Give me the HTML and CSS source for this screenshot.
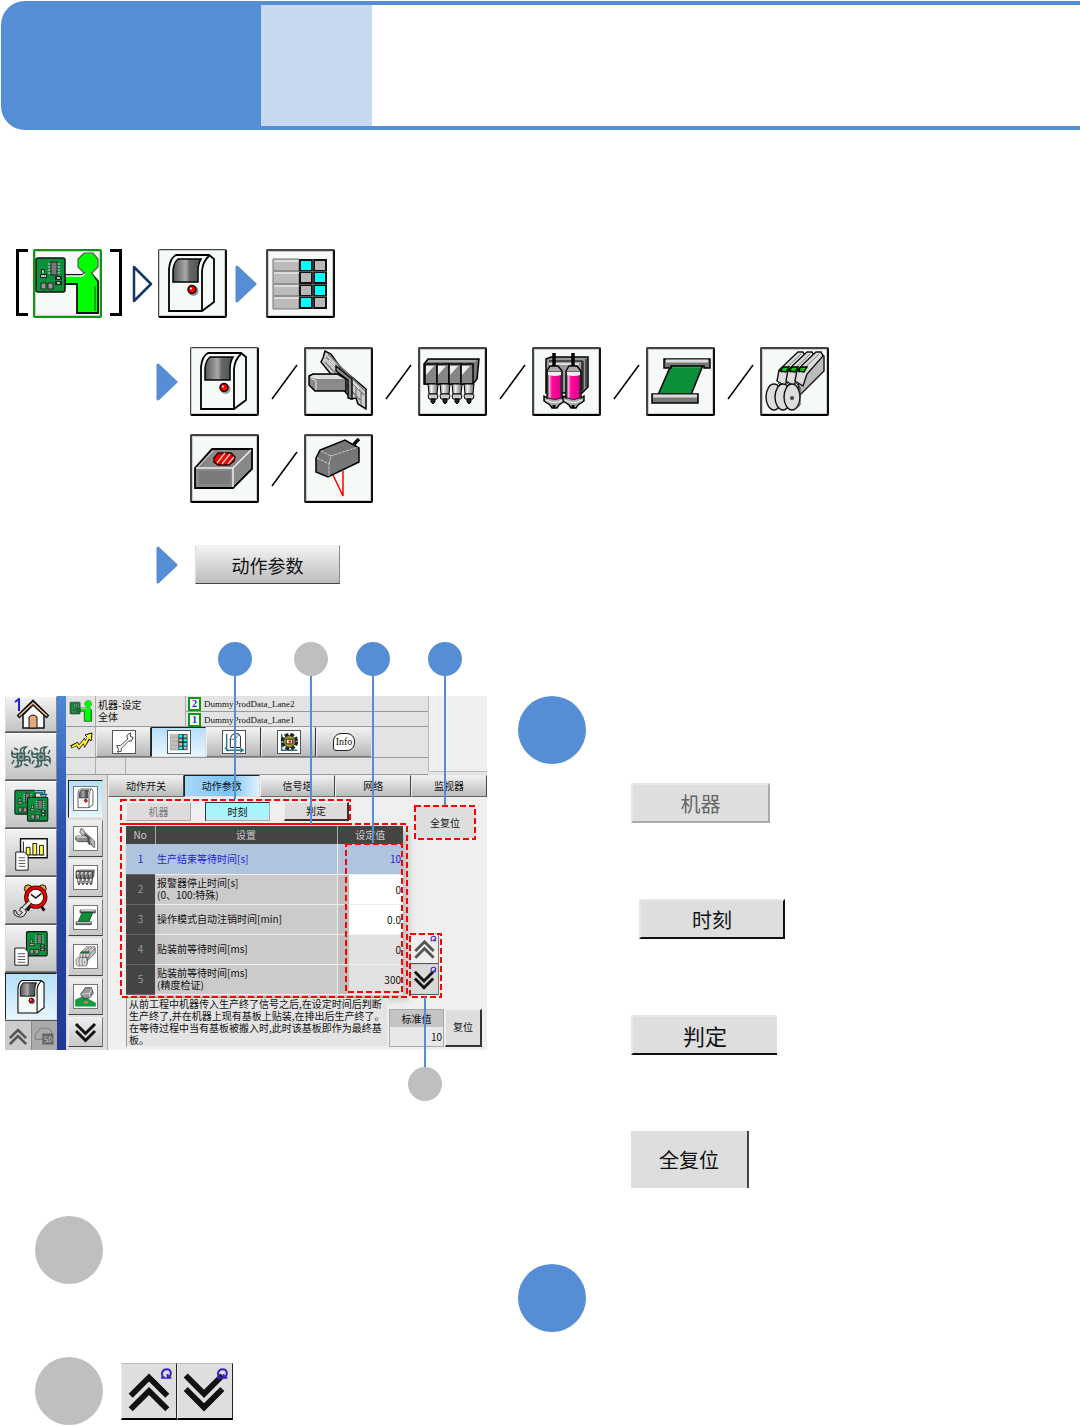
FILE: index.html
```
<!DOCTYPE html>
<html lang="zh-CN">
  <head>
    <meta charset="UTF-8" />
    <meta name="viewport" content="width=device-width, initial-scale=1.0" />
    <title>动作参数</title>
    <link rel="stylesheet" href="styles.css" />
  </head>
  <body>
    <!-- icon set -->
    <svg class="sprite" aria-hidden="true">
      <defs>
        <linearGradient id="g-window">
          <stop offset="0" stop-color="#555" />
          <stop offset="0.45" stop-color="#aaa" />
          <stop offset="0.6" stop-color="#666" />
          <stop offset="1" stop-color="#4c524e" />
        </linearGradient>
        <linearGradient id="g-metal">
          <stop offset="0" stop-color="#888" />
          <stop offset="0.35" stop-color="#eee" />
          <stop offset="1" stop-color="#666" />
        </linearGradient>
        <linearGradient id="g-pink">
          <stop offset="0" stop-color="#fff" />
          <stop offset="0.3" stop-color="#ff0a9a" />
          <stop offset="1" stop-color="#e0008a" />
        </linearGradient>
        <g id="chips">
          <rect x="3" y="9" width="29" height="34" rx="2" fill="#0a9038" stroke="#111" stroke-width="1.5" />
          <path d="M15 15h12M15 18h12M15 21h12M15 24h12" stroke="#cdd" />
          <rect x="18" y="13" width="6" height="13" fill="#777" stroke="#222" />
          <path d="M10 20v4M7 27h7M22 29h7M22 34h7" stroke="#222" stroke-width="4" />
          <path d="M10 21v3M8 27h5M24 29h3M24 34h3" stroke="#bbb" stroke-width="2" />
          <path d="M8 34h5v6H8zM15 34h5v6h-5z" fill="#999" stroke="#222" />
        </g>
      </defs>
      <symbol id="i-person" viewBox="0 0 69 69">
        <path d="M32 26h17l5-3h3l8 9v32H44V35H32z" fill="#00ff00" stroke="#111" stroke-width="1.800" />
        <path d="M32 27h17l4-3-9-6V9l6-6h4" fill="none" stroke="#fff" stroke-width="1.500" />
        <path d="M51 4h9l5 6v8l-6 6h-8l-6-6v-8z" fill="#00ff00" stroke="#555" stroke-width="1.2" />
        <path d="M55 20l-5 9h12z" fill="#00ff00" />
        <path d="M62 37v25" stroke="#00b000" stroke-width="2" />
        <use href="#chips" />
      </symbol>
      <symbol id="i-machine" viewBox="0 0 69 69">
        <path d="M12 62V20Q13 9 19 6h33l5 4v43L45 62z" fill="#f6faf6" stroke="#000" stroke-width="1.8" />
        <path d="M45 62V22q1-10 7-15" fill="none" stroke="#000" stroke-width="1.8" />
        <path d="M16 33V21q1-8 5-11h23q-3 5-3 12v11z" fill="url(#g-window)" stroke="#000" stroke-width="1.5" />
        <circle cx="36.500" cy="42" r="5" fill="#999" />
        <circle cx="35" cy="40.500" r="4" fill="#f00" stroke="#000" stroke-width="1.5" />
        <circle cx="34" cy="39.500" r="1" fill="#fff" />
      </symbol>
      <symbol id="i-grid" viewBox="0 0 69 69">
        <path d="M7 10h26v50H7z" fill="#bbb" stroke="#777" />
        <path d="M8 22h25M8 35h25M8 47h25" stroke="#666" />
        <path d="M8 24h25M8 37h25M8 49h25M8 12h25" stroke="#fff" />
        <path d="M33 10h28v50H33z" fill="#111" />
        <path d="M49 12h10v9H49zM35 24h10v9H35zM35 37h10v9H35zM49 49h10v9H49z" fill="#b8b8b8" />
        <path d="M35 12h10v9H35zM49 24h10v9H49zM49 37h10v9H49zM35 49h10v9H35z" fill="#00ffff" />
        <path d="M47 10v50M33 22.500h28M33 35.500h28M33 47.500h28" stroke="#888" stroke-width="0.600" />
      </symbol>
      <symbol id="i-conveyor" viewBox="0 0 69 69">
        <path d="M19 11l2-7 6 3 9 13 26 22v20l-8-5-2-6-5 1-30-37z" fill="#ccc" stroke="#000" stroke-width="1.5" />
        <path d="M22 10l38 38M24 7l37 37M21 15l35 38M57 46v12M52 40v10" fill="none" stroke="#777" stroke-width="1.2" />
        <path d="M25 13l30 29" stroke="#fff" />
        <path d="M32 19l16 13v20l-4-1V33l-12-9z" fill="#8a8a8a" stroke="#000" stroke-width="1.4" />
        <path d="M5 29l4-2h25l8 5v12H11l-6-6z" fill="#888" stroke="#000" stroke-width="1.5" />
        <path d="M6 30l3-2h24l7 4H12z" fill="#ddd" />
        <path d="M14 35h26v7H14z" fill="#8c8c8c" />
        <path d="M7 31l5 3v9" fill="none" stroke="#eee" />
      </symbol>
      <symbol id="i-nozzle" viewBox="0 0 69 69">
        <path d="M6 17l4-5h51l-2 20-4 5H6z" fill="#777" stroke="#000" stroke-width="1.5" />
        <path d="M10 14h48" stroke="#ddd" />
        <g id="nz">
          <path d="M7 17h12v20H7z" fill="#858585" stroke="#000" stroke-width="1.4" />
          <path d="M8 19h8L8 28z" fill="#eee" />
          <path d="M10 37h10l-1 10h-8z" fill="url(#g-metal)" stroke="#000" />
          <path d="M11 47h8l1 2-1 3h-8l-1-3z" fill="#ccc" stroke="#000" />
          <path d="M13 52h4v3l-2 2-2-2z" fill="#222" stroke="#000" />
        </g>
        <use href="#nz" x="12" />
        <use href="#nz" x="24" />
        <use href="#nz" x="36" />
      </symbol>
      <symbol id="i-syringe" viewBox="0 0 69 69">
        <path d="M14 12l5-2h37v30l-6 6H14z" fill="#999" stroke="#000" stroke-width="1.5" />
        <path d="M17 14h33v30M51 14v29M54 12v28" fill="none" stroke="#333" stroke-width="1.5" />
        <path d="M17 17h30" stroke="#ddd" stroke-width="2" />
        <g id="syr">
          <path d="M15 24l3-5h8l4 5v27l3-2v5l-6 4-2 3h-5l-2-3-6-4v-5l3 2z" fill="#aaa" stroke="#000" stroke-width="1.4" />
          <path d="M16 25h13v26q-6 3-13 0z" fill="url(#g-pink)" stroke="#222" />
          <path d="M16 25h13v3q-6 2-13 0z" fill="#eee" />
          <path d="M22 6v13" stroke="#000" stroke-width="3.500" />
          <path d="M14 53q8 5 17 0" fill="none" stroke="#fff" />
          <path d="M22 58v3" stroke="#000" stroke-width="3" />
        </g>
        <use href="#syr" x="19" />
      </symbol>
      <symbol id="i-film" viewBox="0 0 69 69">
        <path d="M25 18h32L45 48H12z" fill="#0a9038" stroke="#000" stroke-width="1.5" />
        <path d="M27 20h28" stroke="#20d060" />
        <path d="M18 12h46v9h-6v-2H25v2h-7z" fill="#777" stroke="#000" stroke-width="1.5" />
        <path d="M20 14h42" stroke="#ddd" stroke-width="3" />
        <path d="M6 47h46v9H6z" fill="#777" stroke="#000" stroke-width="1.5" />
        <path d="M7 49h44" stroke="#ddd" stroke-width="3" />
      </symbol>
      <symbol id="i-feeder" viewBox="0 0 69 69">
        <path d="M38 29L60 6l4 3v15L39 49z" fill="#bbb" stroke="#111" stroke-width="1.4" />
        <g id="feed">
          <path d="M17 34l2-11L38 5h5l2 4-16 18-4 12z" fill="#ddd" stroke="#111" stroke-width="1.4" />
          <path d="M21 26L41 7" stroke="#777" />
          <path d="M20 24l3-4h6l-3 5z" fill="#00d000" stroke="#000" stroke-width="1.4" />
          <ellipse cx="14" cy="50" rx="8" ry="13" fill="#ddd" stroke="#111" stroke-width="1.4" />
          <path d="M18 36l4 4v18l-6 5" fill="none" stroke="#333" />
        </g>
        <use href="#feed" x="9" />
        <use href="#feed" x="18" />
        <circle cx="32" cy="51" r="2" fill="#444" />
      </symbol>
      <symbol id="i-sensor" viewBox="0 0 69 69">
        <path d="M5 34l17-19h40v20L43 54H5z" fill="#888" stroke="#000" stroke-width="1.8" />
        <path d="M6 34h37L61 16M43 34v19" fill="none" stroke="#eee" stroke-width="1.5" />
        <path d="M7 34l16-17" stroke="#ddd" />
        <path d="M9 37h31v13H9z" fill="#7b7b7b" />
        <path d="M28 19h13l4 4-1 4-5 4H28l-4-3v-4z" fill="#e00" stroke="#300" stroke-width="1.500" />
        <path d="M27 29l8-10M32 30l8-10M38 30l6-7" stroke="#fcc" stroke-width="1.3" />
      </symbol>
      <symbol id="i-laser" viewBox="0 0 69 69">
        <path d="M48 14l3-5 4-4" fill="none" stroke="#000" stroke-width="3.500" />
        <path d="M12 24l4-8L41 6l14 8v14L24 43l-12-5z" fill="#777" stroke="#000" stroke-width="1.5" />
        <path d="M13 24l12 6v12M25 30l2-8 27-9M17 17l10 5" fill="none" stroke="#ccc" stroke-dasharray="3 1" />
        <path d="M29 41l10 21V37" fill="none" stroke="#f00" stroke-width="1.500" />
      </symbol>
      <symbol id="i-work" viewBox="0 0 69 69">
        <path d="M4 64V44l24-10 37 20v10z" fill="#0aa040" stroke="#064" />
        <path d="M20 28l14-20h18l6 16-10 14-18 4z" fill="#999" stroke="#111" stroke-width="2" />
        <path d="M24 28l22-4 8-12M46 24l2 14" fill="none" stroke="#eee" stroke-width="2" />
        <ellipse cx="36" cy="52" rx="7" ry="4" fill="#f65" />
      </symbol>
      <symbol id="i-boards" viewBox="0 0 60 50">
        <g transform="translate(4 -5)"><use href="#chips" /></g>
        <path d="M36 6h12v7" fill="none" stroke="#111" stroke-width="5" />
        <path d="M35 6h13v5" fill="none" stroke="#5cf" stroke-width="2.500" />
        <path d="M43 10h10l-5 6z" fill="#5cf" stroke="#111" />
        <g transform="translate(22 5)"><use href="#chips" /></g>
      </symbol>
      <symbol id="i-home" viewBox="0 0 42 32">
        <path d="M13 30V17L23 7l11 10v13z" fill="#fff" stroke="#111" stroke-width="1.5" />
        <path d="M8 19L23 4l15 15" fill="none" stroke="#111" stroke-width="4" />
        <path d="M9 18L23 5l14 13" fill="none" stroke="#f3c49b" stroke-width="1.500" />
        <path d="M19 30V19q4-4 8 0v11z" fill="#e9a77c" stroke="#111" />
        <path d="M5 4l4-3v12" fill="none" stroke="#22c" stroke-width="2" />
      </symbol>
      <symbol id="i-fans" viewBox="0 0 42 24">
        <g id="fan" fill="none" stroke="#3f5d59" stroke-width="1.600">
          <circle cx="11" cy="12" r="4" fill="#8ba8a0" />
          <path d="M11 8q-2-6 5-6-4 3-1 7M15 12q6-2 5 5-2-4-6-1M11 16q2 6-5 6 4-3 1-7M7 12q-6 2-5-5 2 4 6 1" />
          <path d="M8 5L4 3M18 9l2-4M14 19l4 2M4 15l-2 4" />
          <circle cx="11" cy="12" r="1" />
        </g>
        <use href="#fan" x="20" />
      </symbol>
      <symbol id="i-chart" viewBox="0 0 42 42">
        <path d="M10 6h28v20H10z" fill="#fff" stroke="#111" stroke-width="1.500" />
        <path d="M13 9v14h22" fill="none" stroke="#111" />
        <path d="M16 15h4v8h-4zM23 11h4v12h-4zM30 13h4v10h-4z" fill="#ffff50" stroke="#111" />
        <path d="M5 20h9l4 4v15H5z" fill="#fff" stroke="#111" />
        <path d="M8 26h7M8 29h7M8 32h7M8 35h7" stroke="#555" />
      </symbol>
      <symbol id="i-alarm" viewBox="0 0 42 42">
        <circle cx="18" cy="8" r="4" fill="#e8a840" stroke="#111" />
        <circle cx="33" cy="8" r="4" fill="#e8a840" stroke="#111" />
        <path d="M20 27l-3 4M32 27l3 4" stroke="#111" stroke-width="3" />
        <circle cx="26" cy="17" r="10" fill="#fff" stroke="#400" stroke-width="4.500" />
        <circle cx="26" cy="17" r="10" fill="none" stroke="#e00" stroke-width="2.500" />
        <path d="M21 14l5 4 6-5" fill="none" stroke="#111" stroke-width="1.500" />
        <path d="M5 31q0 4 4 5l3-3-3-2 1-3q6-1 6 5-2 5-6 5-8-1-7-7z" fill="#ddd" stroke="#111" />
        <path d="M13 29l7-7" stroke="#111" stroke-width="5" />
        <path d="M13 29l7-7" stroke="#ddd" stroke-width="3" />
      </symbol>
      <symbol id="i-report" viewBox="0 0 42 42">
        <g transform="translate(14 -4) scale(0.75)"><use href="#chips" /></g>
        <path d="M4 20h10l4 4v14H4z" fill="#fff" stroke="#111" />
        <path d="M7 26h8M7 29h8M7 32h8M7 35h8" stroke="#555" />
      </symbol>
      <symbol id="i-sd" viewBox="0 0 28 28">
        <path d="M4 12l6-7h10l3 5v8H4z" fill="#aaa" stroke="#777" />
        <path d="M12 11h13v13H12z" fill="#666" />
        <path d="M18 15h-3v3h3v3h-3M20 15v6h2l1-2v-2l-1-2z" fill="none" stroke="#bbb" />
      </symbol>
      <symbol id="i-trend" viewBox="0 0 24 24">
        <path d="M2 17l6-3 2 3 5-6 1 3 5-8" fill="none" stroke="#111" stroke-width="3.500" />
        <path d="M16 5l7-2-1 8z" fill="#ff3" stroke="#111" />
        <path d="M3 17l5-3 2 3 5-6 1 3 4-8" fill="none" stroke="#ffef30" stroke-width="2" />
      </symbol>
      <symbol id="i-wrench" viewBox="0 0 24 24">
        <path d="M4 16l4 0 8-7-1-4 4-3 0 4 3 1-2 4-3 0-8 8 0 3-4 1 1-3z" fill="#fff" stroke="#333" stroke-width="1" />
      </symbol>
      <symbol id="i-axis" viewBox="0 0 24 24">
        <path d="M4 3v18h17M2 18l4 4M19 19l3 2-3 2" fill="none" stroke="#277" stroke-width="1.500" />
        <path d="M8 18V8q1-4 4-5h5l2 3v12z" fill="#fff" stroke="#111" />
        <path d="M14 18V8l3-4M9 9h4" fill="none" stroke="#555" />
      </symbol>
      <symbol id="i-gear" viewBox="0 0 24 24">
        <path d="M4 3v18h17" fill="none" stroke="#277" stroke-width="1.500" />
        <circle cx="12.500" cy="11.500" r="7.500" fill="none" stroke="#222" stroke-width="4" stroke-dasharray="4 2" />
        <circle cx="12.500" cy="11.500" r="6.500" fill="#9a9a30" stroke="#222" />
        <path d="M9 9h7v5H9z" fill="#fff" stroke="#111" />
        <circle cx="13" cy="11.500" r="1.500" fill="#f00" />
      </symbol>
      <symbol id="i-up" viewBox="0 0 56 56">
        <path d="M9 33l19-19 19 19M9 47l19-19 19 19" fill="none" stroke="currentColor" stroke-width="6" />
      </symbol>
      <symbol id="i-down" viewBox="0 0 56 56">
        <path d="M8 12l19 19 19-19M8 26l19 19 19-19" fill="none" stroke="currentColor" stroke-width="6" />
      </symbol>
      <symbol id="i-loop" viewBox="0 0 12 12">
        <path d="M1 10h3q-3-2-2-5 1-3 4-3 4 0 4 4 0 2-3 4h3.500M7 6.500V10" fill="none" stroke="#3a22c8" stroke-width="1.800" />
      </symbol>
      <symbol id="i-slash" viewBox="0 0 27 36">
        <path d="M1 35L26 1" stroke="#000" stroke-width="1.500" />
      </symbol>
      <symbol id="i-next" viewBox="0 0 22 38">
        <path d="M2 2v34l18-17z" fill="#558ed5" stroke="#558ed5" stroke-width="3" stroke-linejoin="round" />
      </symbol>
      <symbol id="i-then" viewBox="0 0 22 38">
        <path d="M3 2v34l17-17z" fill="#fff" stroke="#17375e" stroke-width="2.500" stroke-linejoin="round" />
      </symbol>
    </svg>

    <header class="banner">
      <div class="banner-main"></div>
      <div class="banner-sub"></div>
    </header>

    <nav class="path">
      <div class="path-row">
        <div class="bracket"></div>
        <button class="tile tile-green" aria-label="信息"><svg><use href="#i-person" /></svg></button>
        <div class="bracket bracket-right"></div>
        <svg class="arrow arrow-then"><use href="#i-then" /></svg>
        <button class="tile tile-thin" aria-label="机器"><svg><use href="#i-machine" /></svg></button>
        <svg class="arrow"><use href="#i-next" /></svg>
        <button class="tile" aria-label="设定"><svg><use href="#i-grid" /></svg></button>
      </div>
      <div class="path-row path-row-sub">
        <svg class="arrow"><use href="#i-next" /></svg>
        <div class="units">
          <button class="tile tile-thin" aria-label="全体"><svg><use href="#i-machine" /></svg></button>
          <svg class="slash"><use href="#i-slash" /></svg>
          <button class="tile" aria-label="传送"><svg><use href="#i-conveyor" /></svg></button>
          <svg class="slash"><use href="#i-slash" /></svg>
          <button class="tile" aria-label="贴装头"><svg><use href="#i-nozzle" /></svg></button>
          <svg class="slash"><use href="#i-slash" /></svg>
          <button class="tile" aria-label="点胶头"><svg><use href="#i-syringe" /></svg></button>
          <svg class="slash"><use href="#i-slash" /></svg>
          <button class="tile" aria-label="网板"><svg><use href="#i-film" /></svg></button>
          <svg class="slash"><use href="#i-slash" /></svg>
          <button class="tile" aria-label="供料器"><svg><use href="#i-feeder" /></svg></button>
        </div>
        <div class="units units-second">
          <button class="tile" aria-label="相机"><svg><use href="#i-sensor" /></svg></button>
          <svg class="slash"><use href="#i-slash" /></svg>
          <button class="tile" aria-label="激光传感器"><svg><use href="#i-laser" /></svg></button>
        </div>
      </div>
      <div class="path-row path-row-last">
        <svg class="arrow"><use href="#i-next" /></svg>
        <button class="param-button">动作参数</button>
      </div>
    </nav>

    <main class="guide">
      <section class="guide-left">
        <figure class="figure">
          <div class="screen">
            <div class="side">
              <button class="side-item" aria-label="主页"><svg class="home"><use href="#i-home" /></svg></button>
              <button class="side-item" aria-label="运转"><svg><use href="#i-fans" /></svg></button>
              <button class="side-item" aria-label="品种切换"><svg><use href="#i-boards" /></svg></button>
              <button class="side-item" aria-label="生产信息"><svg><use href="#i-chart" /></svg></button>
              <button class="side-item" aria-label="维护"><svg><use href="#i-alarm" /></svg></button>
              <button class="side-item" aria-label="数据编辑"><svg><use href="#i-report" /></svg></button>
              <button class="side-item selected" aria-label="机器"><svg><use href="#i-machine" /></svg></button>
              <div class="side-foot">
                <button aria-label="上"><svg><use href="#i-up" /></svg></button>
                <button aria-label="SD"><svg><use href="#i-sd" /></svg></button>
              </div>
            </div>
            <div class="rail"></div>
            <div class="panel">
              <div class="top">
                <div class="top-left">
                  <div class="status">
                    <div class="cell cell-icon"><svg><use href="#i-person" /></svg></div>
                    <div class="cell status-name">机器-设定<br />全体</div>
                    <div class="lanes">
                      <div class="lane"><b>2</b>DummyProdData_Lane2</div>
                      <div class="lane"><b>1</b>DummyProdData_Lane1</div>
                    </div>
                  </div>
                  <div class="tools">
                    <div class="cell cell-icon"><svg><use href="#i-trend" /></svg></div>
                    <button class="tool" aria-label="调整"><svg><use href="#i-wrench" /></svg></button>
                    <button class="tool selected" aria-label="设定"><svg><use href="#i-grid" /></svg></button>
                    <button class="tool" aria-label="轴"><svg><use href="#i-axis" /></svg></button>
                    <button class="tool" aria-label="校正"><svg><use href="#i-gear" /></svg></button>
                    <button class="tool tool-info"><span>Info</span></button>
                  </div>
                  <div class="strip"><div class="cell"></div><div class="cell"></div></div>
                </div>
                <div class="top-right"></div>
              </div>
              <div class="body">
                <div class="subside">
                  <button class="sub-item selected" aria-label="全体"><svg><use href="#i-machine" /></svg></button>
                  <button class="sub-item" aria-label="传送"><svg><use href="#i-conveyor" /></svg></button>
                  <button class="sub-item" aria-label="贴装头"><svg><use href="#i-nozzle" /></svg></button>
                  <button class="sub-item" aria-label="网板"><svg><use href="#i-film" /></svg></button>
                  <button class="sub-item" aria-label="供料器"><svg><use href="#i-feeder" /></svg></button>
                  <button class="sub-item" aria-label="基板"><svg><use href="#i-work" /></svg></button>
                  <button class="sub-item sub-more" aria-label="下"><svg><use href="#i-down" /></svg></button>
                </div>
                <div class="content">
                  <div class="tabs">
                    <button class="tab">动作开关</button>
                    <button class="tab selected">动作参数</button>
                    <button class="tab">信号塔</button>
                    <button class="tab">网络</button>
                    <button class="tab">监视器</button>
                  </div>
                  <div class="work">
                    <div class="work-main">
                      <div class="kinds">
                        <button class="kind" disabled>机器</button>
                        <button class="kind active">时刻</button>
                        <button class="kind raised">判定</button>
                      </div>
                      <table class="params">
                        <colgroup>
                          <col class="col-no" />
                          <col />
                          <col class="col-gap" />
                          <col class="col-value" />
                        </colgroup>
                        <thead>
                          <tr><th>No</th><th>设置</th><th colspan="2">设定值</th></tr>
                        </thead>
                        <tbody>
                          <tr class="current">
                            <td class="no">1</td><td class="name"><label for="p1">生产结束等待时间[s]</label></td><td class="gap"></td>
                            <td class="value"><input id="p1" type="text" value="10" /></td>
                          </tr>
                          <tr>
                            <td class="no">2</td><td class="name"><label for="p2">报警器停止时间[s]<br />(0、100:特殊)</label></td><td class="gap"></td>
                            <td class="value editable"><input id="p2" type="text" value="0" /></td>
                          </tr>
                          <tr>
                            <td class="no">3</td><td class="name"><label for="p3">操作模式自动注销时间[min]</label></td><td class="gap"></td>
                            <td class="value editable"><input id="p3" type="text" value="0.0" /></td>
                          </tr>
                          <tr>
                            <td class="no">4</td><td class="name"><label for="p4">贴装前等待时间[ms]</label></td><td class="gap"></td>
                            <td class="value"><input id="p4" type="text" value="0" /></td>
                          </tr>
                          <tr>
                            <td class="no">5</td><td class="name"><label for="p5">贴装前等待时间[ms]<br />(精度检证)</label></td><td class="gap"></td>
                            <td class="value"><input id="p5" type="text" value="300" /></td>
                          </tr>
                        </tbody>
                      </table>
                    </div>
                    <div class="work-side">
                      <button class="reset-all">全复位</button>
                      <div class="scroll">
                        <button aria-label="上翻"><svg><use href="#i-up" /></svg><svg class="loop"><use href="#i-loop" /></svg></button>
                        <button aria-label="下翻"><svg><use href="#i-down" /></svg><svg class="loop"><use href="#i-loop" /></svg></button>
                      </div>
                    </div>
                  </div>
                  <div class="foot">
                    <p class="help">从前工程中机器传入生产终了信号之后,在设定时间后判断<br />生产终了,并在机器上现有基板上贴装,在排出后生产终了。<br />在等待过程中当有基板被搬入时,此时该基板即作为最终基<br />板。</p>
                    <div class="standard">
                      <div class="standard-title">标准值</div>
                      <div class="standard-value">10</div>
                    </div>
                    <button class="reset">复位</button>
                  </div>
                </div>
              </div>
            </div>
          </div>
          <!-- callouts over the screen -->
          <svg class="callouts" viewBox="0 0 482 460">
            <g fill="none" stroke="#ff0000" stroke-width="2" stroke-dasharray="6 3">
              <rect x="116" y="158" width="229" height="24" />
              <rect x="116" y="182" width="286" height="173" />
              <rect x="341" y="202" width="56" height="148" />
              <rect x="410" y="164" width="60" height="33" />
              <rect x="405" y="292" width="31" height="63" />
            </g>
            <path d="M115 182h231" stroke="#ff0000" stroke-width="2" />
            <path d="M230 30v127M306 30v152M368 30v171M440 30v133M420 355v71" stroke="#558ed5" stroke-width="2" />
            <g fill="#558ed5">
              <circle cx="230" cy="17" r="17" />
              <circle cx="368" cy="17" r="17" />
              <circle cx="440" cy="17" r="17" />
            </g>
            <g fill="#bfbfbf">
              <circle cx="306" cy="17" r="17" />
              <circle cx="420" cy="442" r="17" />
            </g>
          </svg>
        </figure>
        <div class="note"><div class="dot dot-gray"></div></div>
        <div class="note">
          <div class="dot dot-gray"></div>
          <div class="pager">
            <button aria-label="上翻"><svg><use href="#i-up" /></svg><svg class="loop"><use href="#i-loop" /></svg></button>
            <button aria-label="下翻"><svg><use href="#i-down" /></svg><svg class="loop"><use href="#i-loop" /></svg></button>
          </div>
        </div>
      </section>

      <section class="guide-right">
        <div class="dot"></div>
        <div class="samples">
          <button class="sample sample-disabled" disabled>机器</button>
          <button class="sample sample-time">时刻</button>
          <button class="sample sample-judge">判定</button>
          <button class="sample sample-reset">全复位</button>
        </div>
        <div class="dot"></div>
      </section>
    </main>
  </body>
</html>
```
FILE: styles.css
```
* {
  box-sizing: border-box;
}
body {
  margin: 0;
  background-color: #fff;
  color: #111;
  font-family: "Noto Sans CJK SC", sans-serif;
}
button {
  margin: 0;
  padding: 0;
  font-family: inherit;
  color: inherit;
  border: none;
  border-radius: 0;
  background: none;
}
svg {
  display: block;
}
.sprite {
  position: absolute;
  width: 0;
  height: 0;
}

/* banner */
.banner {
  display: flex;
  height: 129px;
  margin: 1px 0 0 1px;
  border: 4px solid #558ed5;
  border-left-width: 24px;
  border-right: none;
  border-radius: 24px 0 0 24px;
}
.banner-main {
  width: 236px;
  background-color: #558ed5;
}
.banner-sub {
  width: 111px;
  background-color: #c6d9f1;
}

/* menu path */
.path {
  padding: 119px 16px 0;
}
.path-row {
  display: flex;
  align-items: center;
}
.path-row-sub {
  flex-wrap: wrap;
  gap: 18px 12px;
  padding: 29px 0 0 140px;
}
.path-row-last {
  gap: 17px;
  padding: 42px 0 0 140px;
}
.units {
  display: flex;
  align-items: center;
}
.units-second {
  flex-basis: 100%;
  padding-left: 34px;
}
.tile {
  width: 69px;
  height: 69px;
  border: 2px solid;
  border-color: #444 #111 #000 #444;
  border-radius: 2px;
  background-color: #f6faf6;
  box-shadow: inset 0 0 0 1px #ccc;
}
.tile svg {
  width: 69px;
  height: 69px;
  margin: -2px;
}
.tile-thin {
  border-width: 1px 2px 2px 1px;
}
.tile-green {
  border-color: #0a9a10;
}
.bracket {
  align-self: flex-start;
  width: 12px;
  height: 67px;
  margin-right: 5px;
  border: 3px solid #000;
  border-right: none;
}
.bracket-right {
  margin: 0 9px 0 8px;
  border: 3px solid #000;
  border-left: none;
}
.arrow {
  width: 22px;
  height: 38px;
}
.path-row > .tile + .arrow {
  margin: 0 9px 0 8px;
}
.arrow-then {
  margin-right: 5px;
}
.slash {
  width: 27px;
  height: 36px;
  margin: 0 6px 0 12px;
}
.param-button {
  width: 145px;
  height: 39px;
  font-size: 18px;
  border: 1px solid;
  border-color: #eee #888 #444 #ddd;
  background: linear-gradient(#f4f4f4, #bcbcbc);
}

/* guide columns */
.guide {
  display: grid;
  grid-template-columns: minmax(513px, 47%) 1fr;
  padding: 58px 0 0 5px;
}
.figure {
  position: relative;
  width: 482px;
  margin: 0;
  padding: 54px 0 52px;
}
.callouts {
  position: absolute;
  top: 0;
  left: 0;
  width: 482px;
  height: 460px;
  pointer-events: none;
}
.dot {
  width: 68px;
  height: 68px;
  border-radius: 50%;
  background-color: #558ed5;
}
.dot-gray {
  background-color: #bfbfbf;
}
.note {
  display: flex;
  align-items: center;
  gap: 18px;
  height: 68px;
  margin: 114px 0 0 30px;
}
.note + .note {
  margin-top: 73px;
}
.pager,
.scroll {
  display: flex;
}
.pager button {
  position: relative;
  width: 56px;
  height: 57px;
  border: 1px solid;
  border-color: #bbb #222 #000 #eee;
  border-bottom-width: 2px;
  background-color: #dedede;
}
.pager svg {
  width: 54px;
  height: 54px;
}
.pager .loop,
.scroll .loop {
  position: absolute;
  top: 3px;
  right: 3px;
  width: 13px;
  height: 13px;
}
.guide-right {
  padding-top: 54px;
}
.samples {
  display: flex;
  flex-direction: column;
  align-items: flex-start;
  gap: 76px;
  padding: 19px 0 76px 113px;
}
.sample {
  width: 146px;
  height: 40px;
  font-size: 20px;
  border: 2px solid #e8e8e8;
  background-color: #dedede;
}
.sample-disabled {
  width: 139px;
  border-right-color: #aaa;
  border-bottom-color: #aaa;
  color: #666;
}
.sample-time {
  margin-left: 8px;
  border-right-color: #111;
  border-bottom-color: #111;
}
.sample-judge {
  font-size: 22px;
  line-height: 30px;
  border-right: none;
  border-bottom-color: #111;
}
.sample-reset {
  width: 118px;
  height: 57px;
  border: none;
  border-right: 2px solid #444;
}

/* machine screen */
.screen {
  display: grid;
  grid-template-columns: 52px 9px 1fr;
  height: 354px;
  font-size: 10px;
  line-height: 12px;
  background-color: #efefef;
}
.screen button {
  font-size: 10px;
  line-height: 12px;
}
.side {
  display: flex;
  flex-direction: column;
  gap: 1px;
  background-color: #555;
}
.side-item {
  display: flex;
  align-items: center;
  justify-content: center;
  height: 47px;
  background: linear-gradient(#f2f2f2, #c4c4c4);
  border: 1px solid;
  border-color: #fff #888 #777 #ddd;
}
.side-item:first-child {
  height: 36px;
}
.side-item svg {
  width: 42px;
  height: 40px;
}
.side-item .home {
  height: 32px;
}
.side-item.selected,
.tool.selected,
.sub-item.selected,
.tab.selected {
  border-color: #222 #ddd #ddd #222;
  background: linear-gradient(#b4dffa, #e8f6ff);
}
.side-foot {
  display: flex;
  flex: 1;
  background-color: #ccc;
}
.side-foot button {
  display: flex;
  flex: 1;
  align-items: center;
  justify-content: center;
  border-right: 1px solid #888;
  color: #555;
}
.side-foot button + button {
  border: none;
  background-color: #aaa;
}
.side-foot svg {
  width: 24px;
  height: 24px;
}
.rail {
  background: linear-gradient(#4f86d8, #2348a4 45%, #203a94);
}
.panel {
  display: flex;
  flex-direction: column;
}
.top {
  display: flex;
  height: 79px;
  background-color: #e3e3e3;
}
.top-left {
  display: flex;
  flex: 1;
  flex-direction: column;
}
.top-right {
  width: 59px;
  height: 76px;
  border: 1px solid #bbb;
  border-width: 0 0 1px 1px;
  background-color: #f0f0f0;
}
.status,
.tools,
.strip {
  display: flex;
  border-bottom: 1px solid #999;
}
.status {
  height: 31px;
}
.tools {
  height: 31px;
}
.strip {
  flex: 1;
}
.cell {
  width: 30px;
  border-right: 1px solid #aaa;
}
.cell-icon {
  display: flex;
  align-items: center;
  justify-content: center;
}
.cell-icon svg {
  width: 24px;
  height: 24px;
}
.status-name {
  width: 90px;
  padding: 3px 0 0 2px;
}
.lanes {
  flex: 1;
}
.lane {
  display: flex;
  align-items: center;
  gap: 3px;
  height: 16px;
  padding-left: 2px;
  border-bottom: 1px solid #999;
  font-family: "Liberation Serif", serif;
  font-size: 9px;
}
.lane + .lane {
  border: none;
}
.lane b {
  width: 13px;
  height: 14px;
  border: 2px solid #0a9a10;
  background-color: #fff;
  color: #22c;
  font-size: 10px;
  line-height: 10px;
  text-align: center;
}
.tool {
  display: flex;
  align-items: center;
  justify-content: center;
  width: 55px;
  background: linear-gradient(#f2f2f2, #b8b8b8);
  border: 1px solid;
  border-color: #eee #333 #777 #eee;
}
.tool svg {
  width: 24px;
  height: 24px;
  border: 1px solid #555;
  background-color: #fff;
}
.tool-info {
  border-right: none;
  font-family: "Liberation Serif", serif;
}
.tool-info span {
  padding: 2px;
  border: 1px solid #222;
  border-radius: 8px 8px 8px 3px;
  background-color: #fff;
}
.body {
  display: flex;
  flex: 1;
}
.subside {
  display: flex;
  flex-direction: column;
  gap: 2px;
  width: 42px;
  padding: 5px 4px 3px 2px;
  border-right: 1px solid #aaa;
  background-color: #ddd;
}
.sub-item {
  display: flex;
  flex: 1;
  align-items: center;
  justify-content: center;
  border: 1px solid;
  border-color: #eee #777 #444 #eee;
  background: linear-gradient(#eee, #c8c8c8);
}
.sub-item svg {
  width: 25px;
  height: 25px;
  border: 1px solid #777;
  background-color: #fff;
}
.sub-more {
  flex: 0 0 29px;
}
.sub-more svg {
  width: 28px;
  height: 28px;
  border: none;
  background: none;
}
.content {
  flex: 1;
}
.tabs {
  display: grid;
  grid-template-columns: repeat(5, 1fr);
  height: 22px;
}
.tab {
  border: 1px solid;
  border-color: #eee #444 #666 #eee;
  background: linear-gradient(#f0f0f0, #bcbcbc);
}
.tab.selected {
  background: linear-gradient(90deg, #a6d8f8, #7cc4f4 60%, #e0f2fe);
}
.work {
  display: flex;
  gap: 7px;
  padding: 5px 0 0 18px;
}
.work-main {
  width: 277px;
}
.kinds {
  display: flex;
  gap: 14px;
}
.kind {
  width: 65px;
  height: 19px;
  border: 1px solid;
  border-color: #eee #aaa #aaa #eee;
  background-color: #dcdcdc;
}
.kind:disabled {
  color: #777;
}
.kind.active {
  border-color: #333 #aaa #aaa #333;
  background-color: #a8f4f8;
}
.kind.raised {
  border-right: 2px solid #333;
  border-bottom: 2px solid #333;
}
.params {
  width: 100%;
  margin-top: 5px;
  border-collapse: collapse;
  table-layout: fixed;
  box-shadow: 5px 4px 8px #bbb;
}
.col-no {
  width: 29px;
}
.col-gap {
  width: 12px;
}
.col-value {
  width: 54px;
}
.params th {
  height: 18px;
  padding: 0;
  background-color: #444;
  color: #ccc;
  font-weight: normal;
}
.params th + th {
  border-left: 1px solid #aaa;
}
.params td {
  height: 30px;
  padding: 0;
  border-bottom: 1px solid #eee;
  background-color: #cbcbcb;
}
.params td.no {
  background-color: #444;
  border-bottom-color: #666;
  color: #999;
  text-align: center;
}
.params td.name {
  padding-left: 2px;
}
.params td.gap {
  border-left: 1px solid #eee;
  background-color: #bfbfbf;
}
.params td.value {
  background-color: #e2e2e2;
}
.params td.editable {
  background-color: #fff;
}
.params .current td {
  background-color: #b0c4de;
  color: #1c1cd8;
}
.params input {
  display: block;
  width: 100%;
  padding: 0 2px 0 0;
  border: none;
  background: none;
  color: inherit;
  font-family: inherit;
  font-size: 10px;
  text-align: right;
}
.work-side {
  display: flex;
  flex-direction: column;
  justify-content: space-between;
}
.reset-all {
  width: 60px;
  height: 31px;
  margin: 5px 0 0 5px;
  background-color: #dedede;
}
.scroll {
  flex-direction: column;
  width: 29px;
}
.scroll button {
  position: relative;
  height: 31px;
  border: 1px solid;
  border-color: #ccc #777 #555 #ccc;
  background-color: #d8d8d8;
}
.scroll button:first-child {
  background-color: #eee;
  color: #555;
}
.scroll svg {
  width: 27px;
  height: 29px;
}
.scroll .loop {
  top: 1px;
  right: 1px;
  width: 7px;
  height: 7px;
}
.foot {
  display: flex;
  align-items: flex-end;
  gap: 1px;
  padding: 2px 0 0 18px;
}
.help {
  width: 262px;
  height: 50px;
  margin: 0;
  padding: 0 0 0 2px;
  border: 1px solid #aaa;
  border-color: #999 #eee #eee #999;
  background-color: #e4e4e4;
  white-space: nowrap;
}
.standard {
  width: 55px;
  height: 38px;
  border: 1px solid #aaa;
  background-color: #e8e8e8;
}
.standard-title {
  height: 17px;
  line-height: 17px;
  text-align: center;
  background-color: #c4c4c4;
}
.standard-value {
  padding: 4px 1px 0 0;
  text-align: right;
}
.reset {
  width: 37px;
  height: 38px;
  border: 1px solid;
  border-color: #eee #333 #333 #eee;
  border-right-width: 2px;
  border-bottom-width: 2px;
  background-color: #dedede;
}
```
